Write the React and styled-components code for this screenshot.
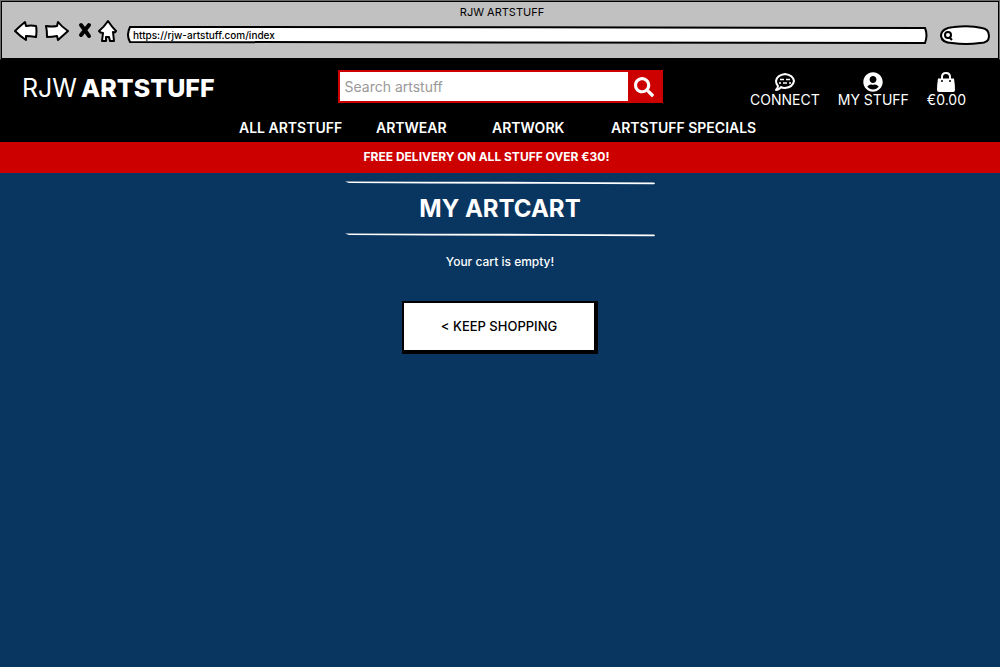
import React from "react";
import styled, { createGlobalStyle } from "styled-components";
import { FaSearch, FaUserCircle } from "react-icons/fa";

const GlobalStyle = createGlobalStyle`
  * { box-sizing: border-box; }
  html { background: #083661; }
  body {
    margin: 0;
    color: #fff;
    font-family: Inter, "Liberation Sans", sans-serif;
    font-size: 14px;
    line-height: 16px;
  }
  button, input { font: inherit; }
  h1, p { margin: 0; }
`;

const Page = styled.div`
  min-height: 100vh;
  background: #083661;
`;

const Browser = styled.header`
  padding: 5px 9px 16px 13px;
  background: #c1c1c1;
  border: 1px solid #6b6b6b;
  border-bottom-color: #000;
  box-shadow: inset 0 0 0 1px #000;
  color: #000;
`;

const WindowTitle = styled.p`
  font-size: 11px;
  line-height: 13px;
  text-align: center;
`;

const Toolbar = styled.div`
  display: flex;
  align-items: center;
  height: 24px;
`;

const ToolButton = styled.button`
  display: flex;
  padding: 0;
  margin-right: ${(p) => p.$gap}px;
  border: 0;
  background: none;

  svg {
    display: block;
    fill: #fff;
    stroke: #000;
    stroke-linejoin: round;
    stroke-linecap: round;
  }
`;

const SketchField = styled.div`
  position: relative;
  display: flex;
  align-items: center;
  flex: ${(p) => (p.$width ? `0 0 ${p.$width}px` : "1")};
  min-width: 0;
  height: ${(p) => p.$height}px;
  padding: 0 6px;

  input {
    position: relative;
    flex: 1;
    width: 0;
    min-width: 0;
    padding: 0;
    border: 0;
    outline: 0;
    background: none;
    color: #000;
    font-size: 10px;
    font-weight: 500;
    line-height: 12px;
  }
`;

const FieldOutline = styled.svg`
  position: absolute;
  inset: 0;
  width: 100%;
  height: 100%;
  fill: #fff;
  stroke: #000;
  stroke-width: 2;

  path { vector-effect: non-scaling-stroke; }
`;

const FieldGlyph = styled.svg`
  position: relative;
  flex: none;
  width: 10px;
  height: 10px;
  overflow: visible;
  fill: none;
  stroke: #000;
  stroke-width: 2;
`;

const Fields = styled.div`
  display: flex;
  align-items: center;
  flex: 1;
  gap: 12px;
  min-width: 0;
  padding-top: 8px;
`;

const SiteHeader = styled.div`
  background: #000;
  padding: 10px 22px 6px;
`;

const HeaderRow = styled.div`
  display: grid;
  grid-template-columns: 1fr 325px 1fr;
  height: 40px;
`;

const Logo = styled.a`
  padding-top: 4px;
  color: #fff;
  font-size: 25px;
  line-height: 28px;
  text-decoration: none;
  white-space: nowrap;

  b { margin-left: 4px; font-weight: 800; }
`;

const SearchForm = styled.form`
  display: flex;
  height: 33px;
  border: 2px solid #cd0000;
`;

const SearchInput = styled.input`
  flex: 1;
  min-width: 0;
  padding: 0 5px;
  border: 0;
  border-radius: 0;
  background: #fff;

  &::placeholder { color: #999; opacity: 1; }
`;

const SearchButton = styled.button`
  display: grid;
  place-items: center;
  width: 33px;
  padding: 0;
  border: 0;
  background: #cd0000;
  color: #fff;
  font-size: 20px;
`;

const Actions = styled.div`
  display: flex;
  justify-content: flex-end;
  gap: 18px;
  padding-right: 12px;
`;

const Action = styled.a`
  display: flex;
  flex-direction: column;
  align-items: center;
  padding-top: 2px;
  color: #fff;
  text-decoration: none;
  white-space: nowrap;

  svg { display: block; width: 20px; height: 20px; }
`;

const Nav = styled.nav`
  display: grid;
  grid-template-columns: 137px 116px 119px 150px;
  justify-content: center;
  padding-top: 10px;
`;

const NavLink = styled.a`
  color: #fff;
  font-weight: 600;
  text-decoration: none;
  white-space: nowrap;
`;

const Promo = styled.p`
  padding: 7px 27px 8px 0;
  background: #cd0000;
  font-size: 12px;
  font-weight: 700;
  text-align: center;
`;

const Cart = styled.main`
  display: flex;
  flex-direction: column;
  align-items: center;
  padding-top: 8px;
`;

const Rule = styled.svg`
  display: block;
  width: 310px;
  height: 4px;
  fill: #fff;
`;

const Heading = styled.h1`
  padding: 8px 0;
  font-size: 24px;
  line-height: 32px;
  font-weight: 700;
`;

const Message = styled.p`
  padding: 17px 0 31px;
  font-size: 12px;
  font-weight: 500;
`;

const KeepShopping = styled.button`
  padding: 15px 37px 16px;
  border: 2px solid #000;
  border-right-width: 4px;
  border-bottom-width: 4px;
  background: #fff;
  color: #000;
  font-size: 13px;
  font-weight: 500;
`;

const HandRule = () => (
  <Rule viewBox="0 0 310 4" preserveAspectRatio="none" aria-hidden="true">
    <path d="M0 0.4 Q100 0.6 200 1 L309 1.4 Q311 2.4 309 3.2 L200 2.8 Q100 2.7 4 2 Z" />
  </Rule>
);

export default function App() {
  return (
    <Page>
      <GlobalStyle />
      <Browser>
        <WindowTitle>RJW ARTSTUFF</WindowTitle>
        <Toolbar>
          <ToolButton $gap={6} aria-label="Back">
            <svg width="25" height="24" viewBox="0 0 25 24" strokeWidth="2">
              <path d="M1 12 Q6 7 11 3 L12 7 Q17 6 22 7 Q23 11 22 18 Q16 17 12 17 L12 21 Q6 17 1 12Z" />
            </svg>
          </ToolButton>
          <ToolButton $gap={8} aria-label="Forward">
            <svg width="25" height="24" viewBox="0 0 25 24" strokeWidth="2">
              <path d="M1 7 Q7 8 12 7 L13 3 Q17 8 23 12 L13 21 L12 17 Q7 18 2 18 Q2 11 1 7Z" />
            </svg>
          </ToolButton>
          <ToolButton $gap={5} aria-label="Stop">
            <svg width="15" height="24" viewBox="0 0 15 24" strokeWidth="4">
              <path d="M3 6 Q7 11 11 17 M11 6 Q7 11 3 16" />
            </svg>
          </ToolButton>
          <ToolButton $gap={9} aria-label="Home">
            <svg width="20" height="24" viewBox="0 0 20 24" strokeWidth="2">
              <path d="M1 12 Q6 8 10 2 Q14 8 18 12 Q17 14 15 13 L16 22 L12 22 L11 18 L8 18 L8 22 L4 22 L5 14 Q2 14 1 12Z" />
            </svg>
          </ToolButton>
          <Fields>
            <SketchField $height={18}>
              <FieldOutline viewBox="0 0 800 18" preserveAspectRatio="none" aria-hidden="true">
                <path d="M3 1 Q200 0.8 400 1.2 T797 2 Q800 9 797 17 Q500 16.6 400 16.4 T3 16 Q-1 9 3 1Z" />
              </FieldOutline>
              <input aria-label="Address" defaultValue="https://rjw-artstuff.com/index" />
            </SketchField>
            <SketchField $width={50} $height={20}>
              <FieldOutline viewBox="0 0 50 20" preserveAspectRatio="none" aria-hidden="true">
                <path d="M1 11 Q1 3 14 2 Q30 0 42 3 Q49 4 49 11 Q49 18 40 18 Q26 20 12 18 Q2 18 1 11Z" />
              </FieldOutline>
              <FieldGlyph viewBox="0 0 10 10" aria-hidden="true">
                <circle cx="2" cy="5" r="3" />
                <path d="M3 7 L6 10" />
              </FieldGlyph>
              <input aria-label="Browser search" />
            </SketchField>
          </Fields>
        </Toolbar>
      </Browser>
      <SiteHeader>
        <HeaderRow>
          <Logo href="#">RJW<b>ARTSTUFF</b></Logo>
          <SearchForm>
            <SearchInput aria-label="Search artstuff" placeholder="Search artstuff" />
            <SearchButton type="button" aria-label="Search"><FaSearch /></SearchButton>
          </SearchForm>
          <Actions>
            <Action href="#">
              <svg viewBox="0 0 20 20" fill="none" stroke="#fff" strokeWidth="2" strokeLinejoin="round">
                <path d="M3 14 Q1 12 1 9 Q2 3 10 2 Q18 3 19 9 Q18 15 10 16 Q7 16 6 15 Q4 18 1 18 Q3 16 3 14Z" />
                <path d="M5 7.5 H9 M11 7.5 H15 M4 11 H6 M8 11 H12 M14 11 H16" strokeWidth="1.6" />
              </svg>
              CONNECT
            </Action>
            <Action href="#"><FaUserCircle />MY STUFF</Action>
            <Action href="#">
              <svg viewBox="0 0 20 20">
                <path d="M6 8 V5 Q6 1 10 1 Q14 1 14 5 V8" fill="none" stroke="#fff" strokeWidth="2" />
                <path d="M2 6.5 H18 Q19 13 19 18 Q19 20 17 20 H3 Q1 20 1 18 Q1 13 2 6.5Z" fill="#fff" />
                <circle cx="6" cy="9" r="1" fill="#000" />
                <circle cx="14" cy="9" r="1" fill="#000" />
              </svg>
              €0.00
            </Action>
          </Actions>
        </HeaderRow>
        <Nav>
          <NavLink href="#">ALL ARTSTUFF</NavLink>
          <NavLink href="#">ARTWEAR</NavLink>
          <NavLink href="#">ARTWORK</NavLink>
          <NavLink href="#">ARTSTUFF SPECIALS</NavLink>
        </Nav>
      </SiteHeader>
      <Promo>FREE DELIVERY ON ALL STUFF OVER €30!</Promo>
      <Cart>
        <HandRule />
        <Heading>MY ARTCART</Heading>
        <HandRule />
        <Message>Your cart is empty!</Message>
        <KeepShopping>&lt; KEEP SHOPPING</KeepShopping>
      </Cart>
    </Page>
  );
}
